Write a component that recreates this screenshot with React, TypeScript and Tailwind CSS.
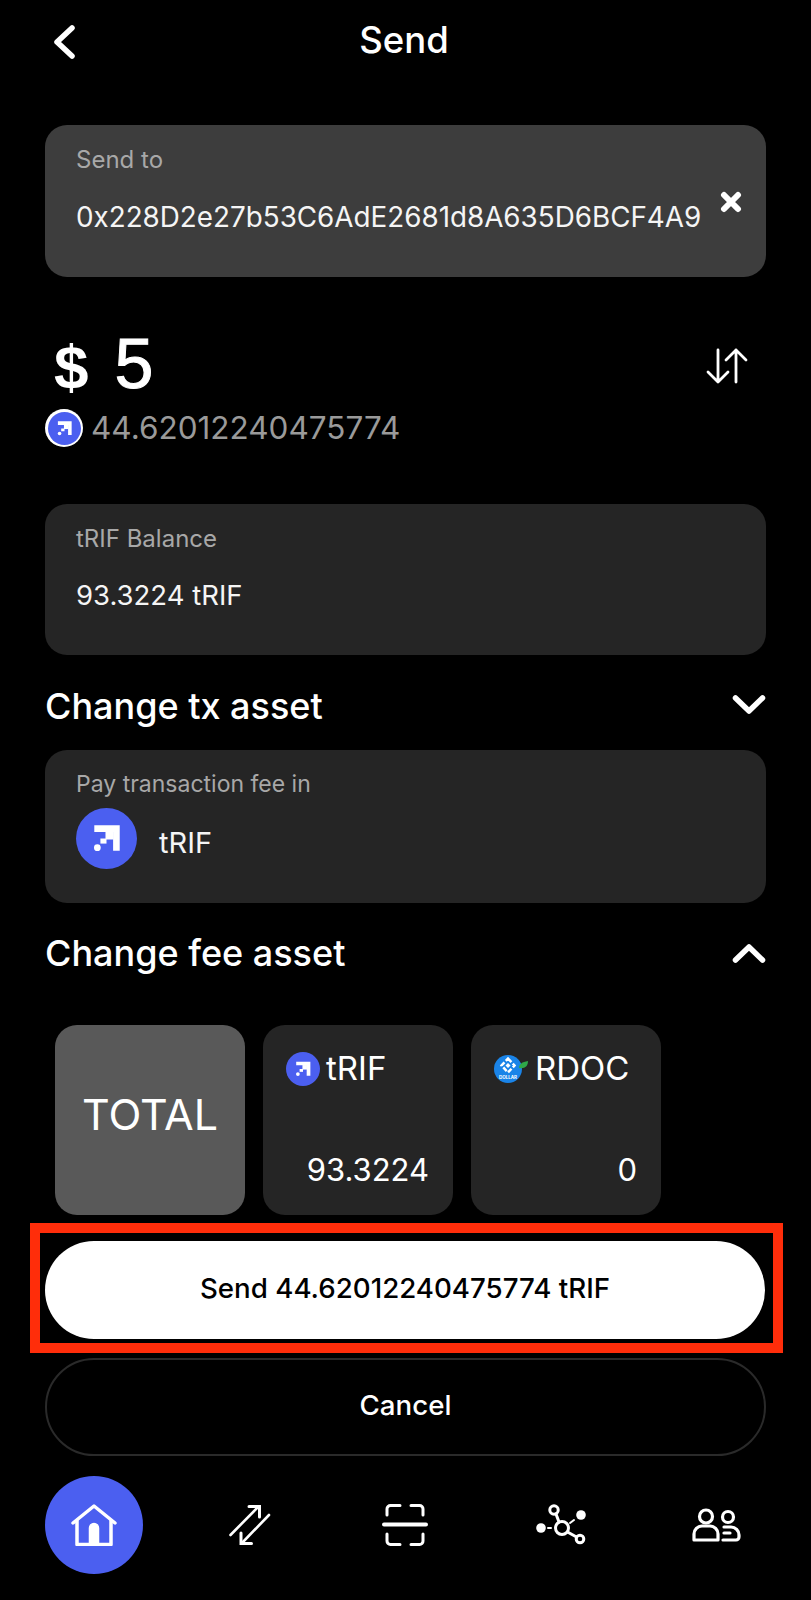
const font = { fontFamily: '"Inter", "Liberation Sans", sans-serif' };

function TokenIcon({ size }: { size: number }) {
  return (
    <svg width={size} height={size} viewBox="0 0 60 60" className="shrink-0">
      <circle cx="30" cy="30" r="30" fill="#4b5ff0" />
      <path d="M18 17h25v25h-6.500V23.500H18z" fill="#fff" />
      <rect x="29" y="23" width="8" height="8" fill="#fff" />
      <rect x="24" y="30" width="6" height="5" fill="#fff" />
      <circle cx="21" cy="39" r="3.300" fill="#fff" />
    </svg>
  );
}

function RdocIcon() {
  return (
    <svg width="35" height="28" viewBox="0 0 35 28" className="shrink-0">
      <circle cx="14" cy="14" r="14" fill="#1a84e8" />
      <path d="M14 3.500l6.500 7-6.500 7-6.500-7z" fill="none" stroke="#fff" strokeWidth="2.500" strokeDasharray="5 2" />
      <path d="M14 8l2.500 2.500L14 13l-2.500-2.500z" fill="#fff" />
      <text x="14" y="24" textAnchor="middle" fontSize="4.500" fontWeight="700" fill="#fff">DOLLAR</text>
      <path d="M25 13c0-4 3-6 9-7 0 5-3 8-9 7z" fill="#2fa84a" />
    </svg>
  );
}

function Chevron({ up }: { up?: boolean }) {
  return (
    <svg width="34" height="22" viewBox="0 0 34 22" fill="none" stroke="#fff" strokeWidth="5.500" strokeLinecap="round" strokeLinejoin="round">
      <path d={up ? "M3.500 18L17 5l13.500 13" : "M3.500 4L17 17 30.500 4"} />
    </svg>
  );
}

function NavIcons() {
  return (
    <div className="mt-[20px] grid grid-cols-5 items-center justify-items-center px-[16.5px]">
      <div className="flex h-[98px] w-[98px] items-center justify-center rounded-full bg-[#4b5ff0]">
        <svg width="46" height="42" viewBox="0 0 46 42" fill="none" stroke="#fff" strokeWidth="3.500" strokeLinejoin="round" strokeLinecap="round">
          <path d="M2 19L23 2l21 17" />
          <path d="M6 17v23.500h34V17" />
          <path d="M18.500 24a4.500 4.500 0 019 0v16h-9z" fill="#fff" strokeWidth="1.500" />
        </svg>
      </div>
      <svg width="42" height="42" viewBox="0 0 42 42" fill="none" stroke="#fff" strokeWidth="2.600" strokeLinecap="round">
        <path d="M1.500 31L29 3" />
        <path d="M20 2.500h10.500V13" strokeWidth="3" />
        <path d="M40 11L13 39" />
        <path d="M12 29v10.500h10.500" strokeWidth="3" />
      </svg>
      <svg width="46" height="42" viewBox="0 0 46 42" fill="none" stroke="#fff" strokeWidth="3" strokeLinecap="round">
        <path d="M5 11V5a3.500 3.500 0 013.500-3.500H18M29 1.500h8.500A3.500 3.500 0 0141 5v6" />
        <path d="M2 20.500h42" strokeWidth="4" />
        <path d="M5 30v7a3.500 3.500 0 003.500 3.500H18M29 40.500h8.500A3.500 3.500 0 0041 37v-7" />
      </svg>
      <svg width="52" height="42" viewBox="0 0 52 42" fill="none" stroke="#fff" strokeWidth="3" strokeLinecap="round">
        <circle cx="27" cy="24" r="6.500" />
        <circle cx="19" cy="6" r="4.200" />
        <circle cx="46" cy="11" r="4.800" fill="#fff" strokeWidth="0" />
        <circle cx="6" cy="24" r="4.800" fill="#fff" strokeWidth="0" />
        <circle cx="45" cy="35" r="3.800" />
        <path d="M21 10l3 8M32.500 28l9 5" />
        <path d="M35 19l4-3" strokeWidth="2" />
        <path d="M13 24h3" strokeWidth="2" />
      </svg>
      <svg width="50" height="34" viewBox="0 0 50 34" fill="none" stroke="#fff" strokeWidth="3.200" strokeLinecap="round" strokeLinejoin="round">
        <circle cx="14" cy="8.500" r="6.500" />
        <circle cx="36" cy="9" r="5.500" />
        <path d="M2 32v-6a8 8 0 018-8h8a8 8 0 018 8v6z" />
        <path d="M32 19h7a8 8 0 018 8v2a3 3 0 01-3 3H31" />
        <path d="M32 25h6" />
      </svg>
    </div>
  );
}

function Tile({ children, className }: { children: React.ReactNode; className: string }) {
  return <div className={"h-[190px] w-[190px] rounded-[22px] " + className}>{children}</div>;
}

export default function App() {
  return (
    <div className="h-[1600px] w-[811px] overflow-hidden bg-black text-white" style={font}>
      <header className="relative flex h-[82px] items-center justify-center pb-[2px] pr-[3px]">
        <svg className="absolute left-[52px] top-[25px]" width="24" height="34" viewBox="0 0 24 34" fill="none" stroke="#fff" strokeWidth="5.500" strokeLinecap="round" strokeLinejoin="round">
          <path d="M20 3L5 17l15 14" />
        </svg>
        <h1 className="text-[36.500px] font-medium">Send</h1>
      </header>

      <div className="px-[45px]">
        <section className="relative mt-[43px] h-[152px] rounded-[22px] bg-[#3d3d3d] px-[31px] pt-[20px]">
          <p className="text-[24px] leading-[30px] text-[#a8a8a8]">Send to</p>
          <p className="mt-[22px] whitespace-nowrap text-[27.800px] leading-[40px] text-[#f5f5f5]">0x228D2e27b53C6AdE2681d8A635D6BCF4A9</p>
          <svg className="absolute right-[24px] top-[66px]" width="22" height="22" viewBox="0 0 22 22" stroke="#fff" strokeWidth="6" strokeLinecap="round">
            <path d="M4 4l14 14M18 4L4 18" />
          </svg>
        </section>

        <div className="mt-[48px] flex items-center justify-between pl-[9px] pr-[18px]">
          <p className="flex items-baseline gap-[26px] leading-[78px]" style={{ fontFamily: '"Liberation Sans", sans-serif' }}>
            <span className="text-[62px] font-bold">$</span>
            <span className="text-[70px] font-normal [-webkit-text-stroke:1px_#fff]">5</span>
          </p>
          <svg width="42" height="36" viewBox="0 0 42 36" fill="none" stroke="#fff" strokeWidth="2.800" strokeLinecap="round" strokeLinejoin="round">
            <path d="M12 2v32M2 24l10 10 10-10" />
            <path d="M30 34V2M20 12L30 2l10 10" />
          </svg>
        </div>

        <div className="mt-[2px] flex items-center gap-[8px]">
          <span className="flex h-[38px] w-[38px] items-center justify-center rounded-full bg-white">
            <TokenIcon size={33} />
          </span>
          <p className="text-[31.500px] leading-[40px] text-[#9a9a9a]">44.62012240475774</p>
        </div>

        <section className="mt-[56px] h-[151px] rounded-[22px] bg-[#252525] px-[31px] pt-[20px]">
          <p className="text-[24px] leading-[30px] text-[#a8a8a8]">tRIF Balance</p>
          <p className="mt-[21px] text-[27.500px] leading-[40px] text-[#f5f5f5]">93.3224 tRIF</p>
        </section>

        <div className="mt-[26px] flex h-[48px] items-center justify-between">
          <h2 className="pt-[2px] text-[36px] font-medium">Change tx asset</h2>
          <Chevron />
        </div>

        <section className="mt-[21px] h-[153px] rounded-[22px] bg-[#252525] px-[31px] pt-[19px]">
          <p className="text-[23px] leading-[30px] text-[#a8a8a8]">Pay transaction fee in</p>
          <div className="mt-[9px] flex items-center gap-[22px]">
            <TokenIcon size={61} />
            <span className="pt-[8px] text-[29px] text-[#f5f5f5]">tRIF</span>
          </div>
        </section>

        <div className="mt-[26px] flex h-[48px] items-center justify-between">
          <h2 className="text-[36px] font-medium">Change fee asset</h2>
          <Chevron up />
        </div>

        <div className="mt-[48px] flex gap-[18px] pl-[10px]">
          <Tile className="flex items-center justify-center bg-[#595959] pb-[12px]">
            <span className="text-[43px]">TOTAL</span>
          </Tile>
          <Tile className="bg-[#252525] pl-[23px] pr-[24px] pt-[27px]">
            <div className="flex h-[34px] items-center gap-[6px]">
              <TokenIcon size={34} />
              <span className="text-[33px]">tRIF</span>
            </div>
            <p className="mt-[64px] text-right text-[31px] leading-[40px]">93.3224</p>
          </Tile>
          <Tile className="bg-[#252525] pl-[23px] pr-[24px] pt-[27px]">
            <div className="flex h-[34px] items-center gap-[6px]">
              <RdocIcon />
              <span className="text-[33px]">RDOC</span>
            </div>
            <p className="mt-[64px] text-right text-[31px] leading-[40px]">0</p>
          </Tile>
        </div>
      </div>

      <div className="mx-[30px] mt-[8px] h-[130px] w-[753px] border-[10px] border-[#ff2d0a] pl-[5px] pr-[8px] pt-[8px]">
        <button className="h-[98px] w-[720px] rounded-full bg-white pb-[2px] text-[27.700px] font-medium text-black">
          Send 44.62012240475774 tRIF
        </button>
      </div>

      <div className="px-[45px]">
        <button className="mt-[5px] h-[98px] w-full rounded-full border-2 border-[#2a2a2a] pb-[2px] text-[27.700px] font-medium text-white">
          Cancel
        </button>
      </div>

      <NavIcons />
    </div>
  );
}
